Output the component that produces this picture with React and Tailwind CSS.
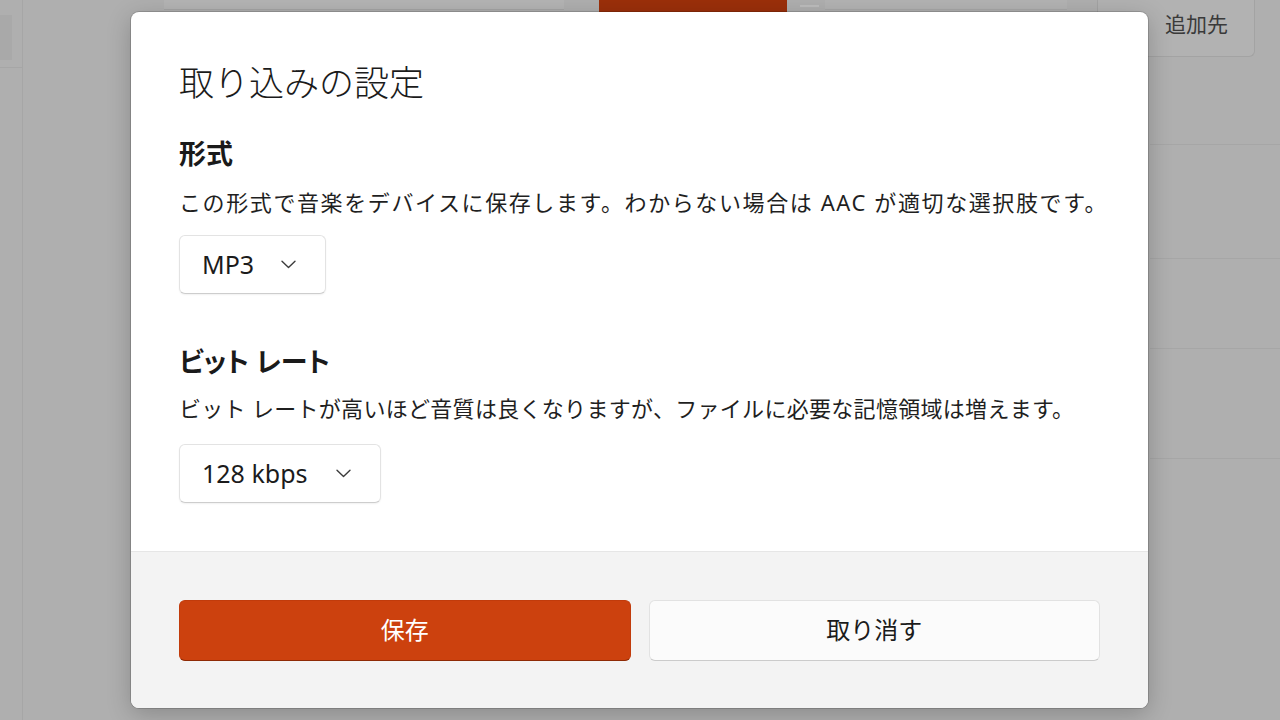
import React from "react";

const jp = "[font-family:'Noto_Sans','Noto_Sans_CJK_JP',sans-serif]";

const Chevron = () => (
  <svg width="15" height="9" viewBox="0 0 15 9" fill="none">
    <path d="M1 1.2l6.5 6.3 6.5-6.3" stroke="#3c3c3c" strokeWidth="1.4" strokeLinecap="round" strokeLinejoin="round" />
  </svg>
);

const Dropdown = ({ value, width }) => (
  <div
    className={`flex h-[59px] items-center justify-between rounded-[6px] border border-[#e3e3e3] border-b-[#cdcdcd] bg-white pl-[22px] pr-[29px] shadow-[0_1px_2px_rgba(0,0,0,0.06)] ${width}`}
  >
    <span className="text-[25px] leading-none text-[#1b1b1b]">{value}</span>
    <Chevron />
  </div>
);

const Section = ({ title, desc, descClass, gapTop, gapDesc, gapBox, children }) => (
  <div className={gapTop}>
    <h2 className="text-[27px] font-bold leading-[34px] text-[#1a1a1a] [font-feature-settings:'palt']">{title}</h2>
    <p className={`${gapDesc} text-[22px] leading-[30px] text-[#1f1f1f] whitespace-nowrap ${descClass}`}>{desc}</p>
    <div className={gapBox}>{children}</div>
  </div>
);

export default function App() {
  return (
    <div className={`relative h-[720px] w-[1280px] overflow-hidden bg-[#afafaf] ${jp}`}>
      {/* app behind the dialog */}
      <div className="flex h-full">
        <aside className="w-[23px] border-r border-[#a6a6a6]">
          <div className="h-[68px] border-b border-[#a6a6a6] pt-[15px]">
            <div className="h-[45px] w-[12px] bg-[#a9a9a9]" />
          </div>
        </aside>

        <main className="flex flex-1 flex-col">
          <div className="flex h-[57px] items-start">
            <div className="ml-[141px] h-[10px] w-[400px] border-b border-[#a4a4a4] bg-[#b4b4b4]" />
            <div className="ml-[35px] h-[12px] w-[188px] bg-[#9b2f0a]" />
            <div className="ml-[13px] mt-[5px] h-[2px] w-[19px] bg-[#bdbdbd]" />
            <div className="ml-[6px] h-[10px] w-[242px] border-b border-[#a7a7a7] bg-[#b3b3b3]" />
            <div className="ml-[30px] flex h-[57px] w-[158px] items-start rounded-b-[6px] border border-t-0 border-[#a3a3a3] bg-[#b2b2b2] pl-[67px] pt-[10px]">
              <span className="text-[21px] leading-[28px] text-[#3a3a3a]">追加先</span>
            </div>
          </div>

          <div className="flex flex-1">
            <div className="flex-1" />
            <div className="w-[130px]">
              <div className="h-[88px] border-b border-[#a6a6a6]" />
              <div className="h-[114px] border-b border-[#a6a6a6]" />
              <div className="h-[90px] border-b border-[#a6a6a6]" />
              <div className="h-[110px] border-b border-[#a6a6a6]" />
            </div>
          </div>
        </main>
      </div>

      {/* import settings dialog */}
      <div className="absolute left-[131px] top-[12px] flex h-[696px] w-[1017px] flex-col overflow-hidden rounded-[8px] bg-white shadow-[0_6px_24px_rgba(0,0,0,0.22)] ring-1 ring-black/15">
        <div className="flex-1 px-[48px] pt-[50px]">
          <h1 className="text-[35px] font-light leading-[42px] text-[#1b1b1b]">取り込みの設定</h1>

          <Section
            title="形式"
            desc="この形式で音楽をデバイスに保存します。わからない場合は AAC が適切な選択肢です。"
            descClass="tracking-[1.6px]"
            gapTop="mt-[33px]"
            gapDesc="mt-[16px]"
            gapBox="mt-[18px]"
          >
            <Dropdown value="MP3" width="w-[147px]" />
          </Section>

          <Section
            title="ビット レート"
            desc="ビット レートが高いほど音質は良くなりますが、ファイルに必要な記憶領域は増えます。"
            descClass="tracking-[0.3px]"
            gapTop="mt-[51px]"
            gapDesc="mt-[14px]"
            gapBox="mt-[21px]"
          >
            <Dropdown value="128 kbps" width="w-[202px]" />
          </Section>
        </div>

        <div className="flex h-[157px] items-center gap-[18px] border-t border-[#e6e6e6] bg-[#f3f3f3] px-[48px]">
          <button className="flex h-[61px] flex-1 items-center justify-center rounded-[6px] border border-[#c13b0b] border-b-[#8e2a05] bg-[#cc410e] text-[24px] text-white">
            保存
          </button>
          <button className="flex h-[61px] flex-1 items-center justify-center rounded-[6px] border border-[#e2e2e2] border-b-[#cbcbcb] bg-[#fbfbfb] text-[24px] text-[#1b1b1b]">
            取り消す
          </button>
        </div>
      </div>
    </div>
  );
}
